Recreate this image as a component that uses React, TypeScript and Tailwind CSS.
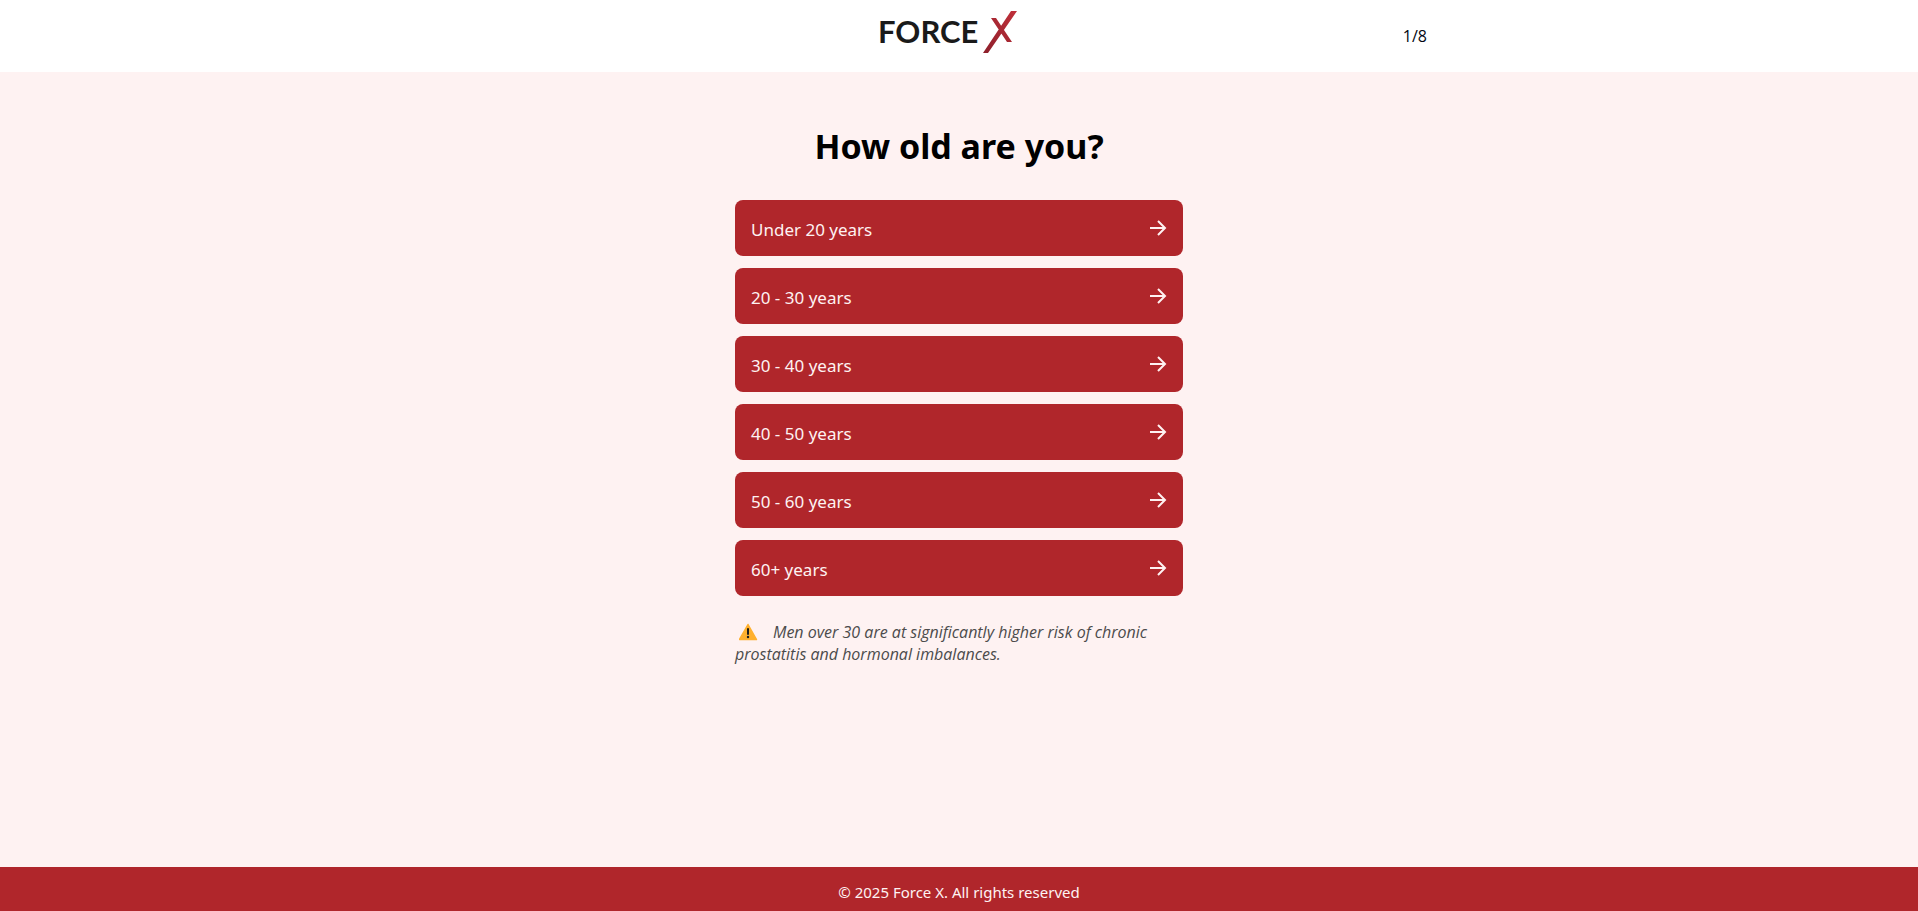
import { useId, useState } from "react";

const AGE_OPTIONS = [
  "Under 20 years",
  "20 - 30 years",
  "30 - 40 years",
  "40 - 50 years",
  "50 - 60 years",
  "60+ years",
];

const TOTAL_STEPS = 8;

export default function App() {
  const [selected, setSelected] = useState<string | null>(null);
  const headingId = useId();

  return (
    <div className="flex min-h-screen flex-col bg-[#fef2f2] font-['Noto_Sans','Open_Sans',sans-serif] text-base text-gray-950">
      <header className="bg-white">
        <div className="mx-auto flex h-18 w-full max-w-5xl items-center justify-between px-11">
          <div />
          <Logo />
          <span className="font-['Open_Sans',sans-serif]">
            1/{TOTAL_STEPS}
          </span>
        </div>
      </header>

      <main className="mx-auto w-full max-w-md flex-1 pt-13">
        <h1
          id={headingId}
          className="text-center text-[34px] leading-11 font-bold text-black"
        >
          How old are you?
        </h1>
        <ul aria-labelledby={headingId} className="mt-8 flex flex-col gap-3">
          {AGE_OPTIONS.map((label) => (
            <li key={label}>
              <OptionButton
                label={label}
                isSelected={label === selected}
                onClick={() => setSelected(label)}
              />
            </li>
          ))}
        </ul>
        <p className="mt-[25px] font-['Open_Sans',sans-serif] text-base leading-[22px] text-[#4b4b4b] italic">
          <WarningIcon />
          Men over 30 are at significantly higher risk of chronic prostatitis
          and hormonal imbalances.
        </p>
      </main>

      <footer className="bg-[#b0262b] pt-[13px] pb-[7px] text-center text-[15px] leading-6 text-[#fef2f2]">
        © 2025 Force X. All rights reserved
      </footer>
    </div>
  );
}

function OptionButton({
  label,
  isSelected,
  onClick,
}: {
  label: string;
  isSelected: boolean;
  onClick: () => void;
}) {
  return (
    <button
      type="button"
      aria-pressed={isSelected}
      onClick={onClick}
      className="flex h-14 w-full cursor-pointer items-center justify-between rounded-lg bg-[#b0262b] px-4 text-left text-[17px] text-[#fef2f2] hover:bg-[#98201f]"
    >
      <span className="pt-1">{label}</span>
      <ArrowIcon />
    </button>
  );
}

function ArrowIcon() {
  return (
    <svg
      viewBox="0 0 18 18"
      className="size-[18px] shrink-0"
      fill="none"
      stroke="currentColor"
      strokeWidth="2"
      aria-hidden="true"
    >
      <path d="M1 9h15M9 2l7 7-7 7" />
    </svg>
  );
}

function WarningIcon() {
  return (
    <svg
      viewBox="0 0 20 18"
      className="mr-3.5 ml-1 inline-block h-[18px] w-5 align-[-3px]"
      role="img"
      aria-label="Warning"
    >
      <path
        d="M9 1.5 17.5 16.5H.5Z"
        fill="#ffb02e"
        stroke="#ffb02e"
        strokeWidth="1.5"
        strokeLinejoin="round"
      />
      <path d="M9 6v5" stroke="#1c1c1c" strokeWidth="2" strokeLinecap="round" />
      <circle cx="9" cy="14" r="1.2" fill="#1c1c1c" />
    </svg>
  );
}

function Logo() {
  return (
    <svg
      viewBox="-4 0 146 56"
      className="h-14 w-[146px]"
      role="img"
      aria-label="Force X"
    >
      <defs>
        <linearGradient id="logo-slash" x1="0" y1="1" x2="1" y2="0">
          <stop offset="0" stopColor="#8c1f2b" />
          <stop offset="1" stopColor="#c1303a" />
        </linearGradient>
      </defs>
      <text
        x="0"
        y="35"
        className="fill-[#1a1a1a] font-['Lato',sans-serif] text-[31px] font-bold"
      >
        FORCE
      </text>
      <path
        d="M133 3h6L110 45h-5ZM113 10h5L134 34h-5Z"
        fill="url(#logo-slash)"
      />
    </svg>
  );
}
